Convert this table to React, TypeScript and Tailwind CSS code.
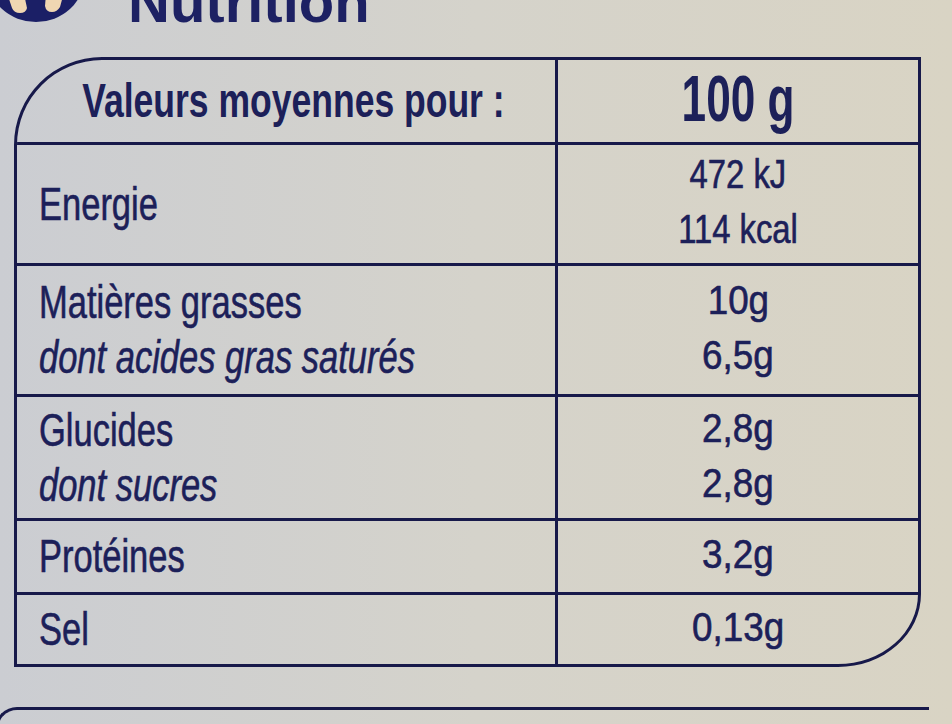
import React from "react";

type Line = { text: string; italic?: boolean };

type Row = {
  height: string;
  labels: Line[];
  values: string[];
  valueScale?: string;
  last?: boolean;
};

const rows: Row[] = [
  {
    height: "h-[121px]",
    labels: [{ text: "Energie" }],
    values: ["472 kJ", "114 kcal"],
    valueScale: "scale-x-[0.82]",
  },
  {
    height: "h-[131px]",
    labels: [
      { text: "Matières grasses" },
      { text: "dont acides gras saturés", italic: true },
    ],
    values: ["10g", "6,5g"],
  },
  {
    height: "h-[124px]",
    labels: [{ text: "Glucides" }, { text: "dont sucres", italic: true }],
    values: ["2,8g", "2,8g"],
  },
  {
    height: "h-[74px]",
    labels: [{ text: "Protéines" }],
    values: ["3,2g"],
  },
  {
    height: "h-[69px]",
    labels: [{ text: "Sel" }],
    values: ["0,13g"],
    last: true,
  },
];

function Logo() {
  return (
    <svg width="84" height="24" viewBox="0 0 84 24" className="block shrink-0">
      <ellipse cx="36" cy="-22" rx="48" ry="44" fill="#1b1f66" />
      <path
        d="M8 -4 L24 -6 L27 8 Q26 13 20 13 Q14 13 12 8 Z"
        fill="#f0d6b2"
      />
      <path
        d="M46 -6 L63 -4 L60 7 Q57 12 52 12 Q46 12 45 6 Z"
        fill="#f0d6b2"
      />
    </svg>
  );
}

function NutritionRow({ row }: { row: Row }) {
  return (
    <div
      className={`flex ${row.height} ${
        row.last ? "" : "border-b-[3px] border-[#17194a]"
      }`}
    >
      <div className="w-[541px] shrink-0 border-r-[3px] border-[#17194a] flex flex-col justify-center pl-[22px]">
        {row.labels.map((l) => (
          <span
            key={l.text}
            className={`block origin-left scale-x-[0.75] whitespace-nowrap text-[46px] leading-[55px] [-webkit-text-stroke:0.6px_currentColor] ${
              l.italic ? "italic" : ""
            }`}
          >
            {l.text}
          </span>
        ))}
      </div>
      <div className="flex-1 flex flex-col items-center justify-center pb-[4px]">
        {row.values.map((v, i) => (
          <span
            key={i}
            className={`block whitespace-nowrap text-[40px] leading-[55px] [-webkit-text-stroke:0.6px_currentColor] ${
              row.valueScale ?? "scale-x-[0.92]"
            }`}
          >
            {v}
          </span>
        ))}
      </div>
    </div>
  );
}

export default function App() {
  return (
    <div
      className="w-[952px] h-[724px] overflow-hidden bg-linear-to-r from-[#cbcdd2] via-[#d5d3cb] to-[#d9d4c4] text-[#1c2059]"
      style={{ fontFamily: '"Liberation Sans", Arial, sans-serif' }}
    >
      <div className="flex items-end h-[24px]">
        <Logo />
        <span className="ml-[44px] text-[58px] font-bold leading-[0.76] text-[#1d2163]">
          Nutrition
        </span>
      </div>

      <div className="mt-[33px] ml-[14px] w-[907px] h-[610px] border-[3px] border-[#17194a] rounded-tl-[88px] rounded-br-[83px_73px] overflow-hidden">
        <div className="flex h-[85px] border-b-[3px] border-[#17194a]">
          <div className="w-[541px] shrink-0 border-r-[3px] border-[#17194a] flex items-center justify-center pl-[14px]">
            <span className="block whitespace-nowrap scale-x-[0.74] text-[48px] font-bold leading-none">
              Valeurs moyennes pour :
            </span>
          </div>
          <div className="flex-1 flex items-center justify-center pb-[6px]">
            <span className="block whitespace-nowrap scale-x-[0.68] text-[65px] font-bold leading-none">
              100 g
            </span>
          </div>
        </div>
        {rows.map((r) => (
          <NutritionRow key={r.labels[0].text} row={r} />
        ))}
      </div>

      <div className="mt-[40px] ml-[-5px] w-[934px] h-[40px] border-t-[3px] border-l-[3px] border-[#17194a] rounded-tl-[22px]" />
    </div>
  );
}
